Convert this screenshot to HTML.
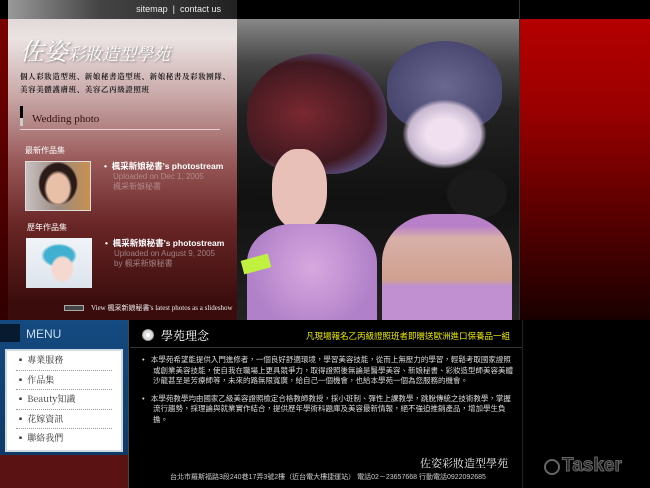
<!DOCTYPE html>
<html><head><meta charset="utf-8"><style>
*{margin:0;padding:0;box-sizing:border-box}
body{width:650px;height:488px;background:#000;position:relative;overflow:hidden;font-family:"Liberation Sans","Noto Sans CJK TC",sans-serif}
.a{position:absolute}
</style></head><body>
<div class="a" style="left:0;top:19px;width:8px;height:301px;background:linear-gradient(#7a0000,#300000)"></div>
<div class="a" style="left:520px;top:19px;width:130px;height:301px;background:linear-gradient(#b40000,#9a0000 30%,#500000 70%,#1a0000)"></div>
<div class="a" style="left:519px;top:0;width:1px;height:320px;background:#333"></div>
<!-- left panel -->
<div class="a" style="left:8px;top:0;width:229px;height:320px;background:linear-gradient(#d8d0d0 0,#ebe2e2 12%,#c9a8a8 30%,#9a5a5a 50%,#6a2626 70%,#3a0c0c 95%)"></div>
<div class="a" style="left:8px;top:0;width:229px;height:19px;background:linear-gradient(90deg,#999,#444 40%,#222);color:#eee;font-size:9px;line-height:19px;text-align:right;padding-right:16px">sitemap &nbsp;|&nbsp; contact us</div>
<div class="a" style="left:20px;top:32px;color:#fff;font-family:'Noto Serif CJK SC',serif;font-style:italic;text-shadow:1px 1px 2px #777;white-space:nowrap"><span style="font-size:24px">佐姿</span><span style="font-size:17px">彩妝造型學苑</span></div>
<div class="a" style="left:20px;top:70px;font-size:7.5px;line-height:13px;color:#222;font-family:'Noto Serif CJK SC',serif;letter-spacing:0.6px;white-space:nowrap;font-weight:bold">個人彩妝造型班、新娘秘書造型班、新娘秘書及彩妝團隊、<br>美容美體護膚班、美容乙丙級證照班</div>
<div class="a" style="left:20px;top:106px;width:3px;height:20px;background:linear-gradient(#000 60%,#ccc 60%)"></div>
<div class="a" style="left:32px;top:113px;font-size:11px;color:#311;font-family:'Liberation Serif',serif">Wedding photo</div>
<div class="a" style="left:20px;top:129px;width:200px;height:1px;background:#e8d0d0"></div>
<div class="a" style="left:25px;top:145px;font-size:8px;color:#fff">最新作品集</div>
<div class="a" style="left:25px;top:161px;width:66px;height:50px;border:1px solid #ddd;background:radial-gradient(ellipse 14px 18px at 50% 55%,#e8c0a8 80%,transparent 100%),radial-gradient(ellipse 20px 22px at 50% 45%,#2a1a18 90%,transparent 100%),linear-gradient(90deg,#c8c0c0,#9a8a80 50%,#c89050)"></div>
<div class="a" style="left:104px;top:160px;font-size:8.5px;color:#fff;font-weight:bold;white-space:nowrap">•&nbsp; 楓采新娘秘書's photostream</div>
<div class="a" style="left:113px;top:172px;font-size:8px;color:#b08888;line-height:10px;white-space:nowrap">Uploaded on Dec 1, 2005<br>楓采新娘秘書</div>
<div class="a" style="left:27px;top:222px;font-size:8px;color:#fff">歷年作品集</div>
<div class="a" style="left:26px;top:238px;width:66px;height:50px;background:radial-gradient(ellipse 12px 14px at 55% 62%,#f5d8d0 80%,transparent 100%),radial-gradient(ellipse 18px 12px at 50% 35%,#40b0d0 80%,transparent 100%),linear-gradient(#f0f4f8,#dde4ec)"></div>
<div class="a" style="left:105px;top:237px;font-size:8.5px;color:#fff;font-weight:bold;white-space:nowrap">•&nbsp; 楓采新娘秘書's photostream</div>
<div class="a" style="left:114px;top:249px;font-size:8px;color:#a08080;line-height:10px;white-space:nowrap">Uploaded on August 9, 2005<br>by 楓采新娘秘書</div>
<div class="a" style="left:64px;top:305px;width:20px;height:6px;border:1px solid #aaa;background:#444"></div>
<div class="a" style="left:91px;top:303px;font-size:7px;color:#eee;font-family:'Liberation Serif',serif;white-space:nowrap">View 楓采新娘秘書's latest photos as a slideshow</div>
<!-- photo -->
<div class="a" style="left:237px;top:19px;width:282px;height:301px;background:linear-gradient(#888 0,#444 15%,#222 30%,#111 60%,#222);overflow:hidden">
 <div class="a" style="left:10px;top:35px;width:140px;height:120px;border-radius:50% 50% 40% 40%;background:radial-gradient(ellipse at 40% 50%,#7a2830,#401820 60%,#5a5080 80%)"></div>
 <div class="a" style="left:35px;top:130px;width:55px;height:80px;border-radius:45%;background:#e8c0b8"></div>
 <div class="a" style="left:150px;top:22px;width:115px;height:90px;border-radius:50% 50% 40% 40%;background:radial-gradient(#6a6890,#4a4870 70%)"></div>
 <div class="a" style="left:165px;top:80px;width:85px;height:70px;border-radius:45%;background:radial-gradient(#f0e0f0 30%,#c8b8d0 60%,transparent 70%)"></div>
 <div class="a" style="left:210px;top:150px;width:60px;height:50px;border-radius:50%;background:#1a1a1a"></div>
 <div class="a" style="left:10px;top:205px;width:130px;height:110px;border-radius:35% 35% 0 0;background:radial-gradient(ellipse at 50% 40%,#d8a8e0,#b080c8 70%)"></div>
 <div class="a" style="left:145px;top:195px;width:130px;height:120px;border-radius:40% 40% 0 0;background:linear-gradient(#b880c8 10%,#d8b0a8 20%,#d0a090 55%,#c090d0 60%)"></div>
 <div class="a" style="left:5px;top:238px;width:28px;height:14px;background:#c0f040;transform:rotate(-15deg)"></div>
</div>
<!-- bottom -->
<div class="a" style="left:0;top:320px;width:128px;height:135px;background:linear-gradient(#144a80,#0e3a68)"></div>
<div class="a" style="left:0;top:455px;width:128px;height:33px;background:#5a1212"></div>
<div class="a" style="left:0;top:324px;width:20px;height:18px;background:#081a30"></div>
<div class="a" style="left:26px;top:327px;font-size:12px;color:#cde;">MENU</div>
<div class="a" style="left:5px;top:349px;width:118px;height:103px;background:#fff;border:2px solid #d0d8e0;padding:0 9px">
 <div style="font-size:9px;color:#333;font-family:'Noto Serif CJK SC',serif;line-height:18.5px">
 <div style="border-bottom:1px dotted #999">▪ 專業服務</div><div style="border-bottom:1px dotted #999">▪ 作品集</div><div style="border-bottom:1px dotted #999">▪ Beauty知識</div><div style="border-bottom:1px dotted #999">▪ 花嫁資訊</div><div>▪ 聯絡我們</div></div>
</div>
<div class="a" style="left:128px;top:320px;width:1px;height:168px;background:#444"></div>
<div class="a" style="left:522px;top:320px;width:1px;height:168px;background:#222"></div>
<div class="a" style="left:143px;top:330px;width:10px;height:10px;border-radius:50%;background:#fff;border:3px solid #ddd;box-shadow:0 0 0 1px #999"></div>
<div class="a" style="left:161px;top:327px;font-size:12px;color:#fff;font-family:'Noto Serif CJK SC',serif">學苑理念</div>
<div class="a" style="left:300px;top:330px;width:210px;text-align:right;font-size:8.5px;color:#ee0;white-space:nowrap">凡現場報名乙丙級證照班者即贈送歐洲進口保養品一組</div>
<div class="a" style="left:130px;top:347px;width:392px;height:1px;background:#333"></div>
<div class="a" style="left:142px;top:355px;width:372px;font-size:7.5px;color:#ddd;line-height:10.5px">
<div style="padding-left:11px;text-indent:-11px">•&nbsp;&nbsp; 本學苑希望能提供入門進修者，一個良好舒適環境，學習美容技能，從而上無壓力的學習，輕鬆考取國家證照或創業美容技能，使自我在職場上更具競爭力，取得證照後無論是醫學美容、新娘秘書、彩妝造型師美容美體沙龍甚至是芳療師等，未來的路無限寬廣，給自己一個機會，也給本學苑一個為您服務的機會。</div>
<div style="padding-left:11px;text-indent:-11px;margin-top:7px">•&nbsp;&nbsp; 本學苑教學均由國家乙級美容證照檢定合格教師教授，採小班制、彈性上課教學，跳脫傳統之技術教學，掌握流行趨勢，採理論與就業實作結合，提供歷年學術科題庫及美容最新情報，絕不強迫推銷產品，增加學生負擔。</div>
</div>
<div class="a" style="left:420px;top:455px;font-size:11px;color:#eee;font-family:'Noto Serif CJK SC',serif;white-space:nowrap">佐姿彩妝造型學苑</div>
<div class="a" style="left:170px;top:472px;font-size:7px;color:#ccc;white-space:nowrap">台北市羅斯福路3段240巷17弄3號2樓（近台電大樓捷運站） 電話02－23657668 行動電話0922092685</div>
<div class="a" style="left:544px;top:459px;width:16px;height:16px;border-radius:50%;border:2px solid #666"></div>
<div class="a" style="left:562px;top:455px;font-size:19px;color:#222;font-weight:bold;-webkit-text-stroke:1px #666">Tasker</div>
</body></html>
